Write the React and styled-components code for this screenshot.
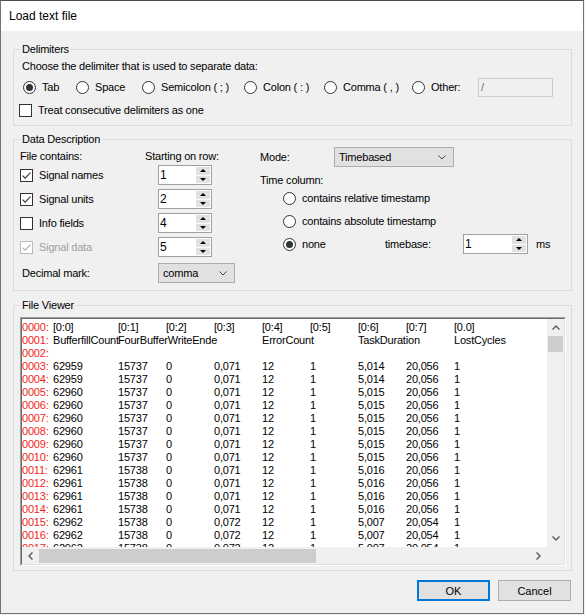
import React from 'react';
import styled, { createGlobalStyle } from 'styled-components';

const GlobalStyle = createGlobalStyle`
  * { box-sizing: border-box; }
  html, body { margin: 0; padding: 0; background: #f0f0f0; }
  body {
    font-family: "Liberation Sans", Arial, sans-serif;
    font-size: 11px;
    letter-spacing: -0.2px;
    color: #000;
  }
`;

const Window = styled.div`
  width: 584px;
  height: 614px;
  display: flex;
  flex-direction: column;
  background: #f0f0f0;
  border: 1px solid #737373;
  border-top-color: #4d4d4d;
`;

const TitleBar = styled.div`
  height: 30px;
  flex: none;
  background: #fff;
  padding-left: 8px;
  font-size: 12px;
  letter-spacing: 0;
  line-height: 30px;
`;

const Body = styled.div`
  flex: 1;
  display: flex;
  flex-direction: column;
  padding: 12px 11px 0 12px;
`;

const GroupBox = styled.fieldset`
  margin: ${p => p.$mt || 0}px 0 0;
  padding: ${p => p.$pt || 0}px 5px ${p => p.$pb || 0}px 6px;
  border: 1px solid #dcdcdc;
  min-width: 0;
`;

const Legend = styled.legend`
  padding: 0 2px;
  line-height: 13px;
`;

const Text = styled.div`
  line-height: 13px;
  padding-left: ${p => p.$indent || 0}px;
  margin-top: ${p => p.$mt || 0}px;
  color: ${p => (p.$disabled ? '#a0a0a0' : 'inherit')};
  white-space: nowrap;
`;

const Row = styled.div`
  display: flex;
  align-items: center;
  height: ${p => p.$h || 20}px;
  margin-top: ${p => p.$mt || 0}px;
  margin-left: ${p => p.$ml || 0}px;
  gap: ${p => p.$gap || 0}px;
`;

const Label = styled.div`
  flex: none;
  width: ${p => (p.$w ? `${p.$w}px` : 'auto')};
  padding-left: ${p => p.$indent || 0}px;
  line-height: 13px;
  white-space: nowrap;
`;

const Option = styled.div`
  display: flex;
  align-items: center;
  gap: 6px;
  flex: none;
  width: ${p => (p.$w ? `${p.$w}px` : 'auto')};
  line-height: 13px;
  white-space: nowrap;
  color: ${p => (p.$disabled ? '#a0a0a0' : 'inherit')};
`;

const RadioCircle = styled.span`
  width: 13px;
  height: 13px;
  flex: none;
  border-radius: 50%;
  border: 1px solid #333;
  background: #fff;
  display: inline-flex;
  align-items: center;
  justify-content: center;

  &::after {
    content: '';
    display: ${p => (p.$checked ? 'block' : 'none')};
    width: 7px;
    height: 7px;
    border-radius: 50%;
    background: #333;
  }
`;

const CheckBoxBox = styled.span`
  width: 13px;
  height: 13px;
  flex: none;
  border: 1px solid ${p => (p.$disabled ? '#bcbcbc' : '#333')};
  background: #fff;
  display: inline-flex;

  svg { display: block; }
`;

const TextBox = styled.div`
  width: ${p => p.$w}px;
  height: 19px;
  border: 1px solid #cccccc;
  background: #f0f0f0;
  color: #6d6d6d;
  padding-left: 2px;
  line-height: 17px;
`;

const SpinnerBox = styled.div`
  width: ${p => p.$w}px;
  height: 20px;
  margin-left: ${p => p.$ml || 0}px;
  display: flex;
  border: 1px solid #a0a0a0;
  background: #fff;
  flex: none;
`;

const SpinValue = styled.div`
  flex: 1;
  padding-left: 1px;
  font-size: 12px;
  line-height: 18px;
`;

const SpinButtons = styled.div`
  width: 16px;
  display: flex;
  flex-direction: column;
  gap: 1px;
  padding: 1px;
`;

const SpinButton = styled.div`
  flex: 1;
  background: #e1e1e1;
  display: flex;
  align-items: center;
  justify-content: center;

  &::after {
    content: '';
    border-left: 3px solid transparent;
    border-right: 3px solid transparent;
    ${p => (p.$down ? 'border-top: 3px solid #000;' : 'border-bottom: 3px solid #000;')}
  }
`;

const ComboBox = styled.div`
  width: ${p => p.$w}px;
  height: 20px;
  flex: none;
  background: #e1e1e1;
  border: 1px solid #adadad;
  display: flex;
  align-items: center;
  justify-content: space-between;
  padding: 0 7px 0 4px;
  line-height: 13px;

  svg { display: block; }
`;

const Columns = styled.div`
  display: flex;
`;

const LeftColumn = styled.div`
  width: 240px;
  flex: none;
  padding-top: 4px;
`;

const StartGrid = styled.div`
  display: grid;
  grid-template-columns: 125px 115px;
  grid-template-rows: 11px repeat(4, 20px);
  row-gap: 4px;
  align-items: center;
`;

const GridHead = styled.div`
  align-self: start;
  line-height: 13px;
  white-space: nowrap;
`;

const RightColumn = styled.div`
  flex: 1;
  padding-top: 1px;
`;

const Viewer = styled.div`
  height: 249px;
  border: 1px solid;
  border-color: #a0a0a0 #ffffff #ffffff #a0a0a0;
`;

const ViewerInner = styled.div`
  height: 100%;
  border: 1px solid;
  border-color: #696969 #e3e3e3 #e3e3e3 #696969;
  background: #fff;
  display: grid;
  grid-template-columns: 1fr 17px;
  grid-template-rows: 1fr 17px;
  overflow: hidden;
`;

const TextArea = styled.div`
  overflow: hidden;
  padding-top: 2px;
`;

const Line = styled.div`
  display: grid;
  grid-template-columns: 31px 65px repeat(7, 48px) auto;
  height: 13px;
  line-height: 13px;
  white-space: nowrap;
`;

const LineNo = styled.span`
  color: #f2261a;
`;

const Cell = styled.span`
  grid-column: ${p => p.$col};
  grid-row: 1;
`;

const VScroll = styled.div`
  background: #f0f0f0;
  display: flex;
  flex-direction: column;
`;

const HScroll = styled.div`
  background: #f0f0f0;
  display: flex;
`;

const ScrollButton = styled.div`
  width: 17px;
  height: 17px;
  flex: none;
  display: flex;
  align-items: center;
  justify-content: center;

  svg { display: block; }
`;

const VThumb = styled.div`
  height: 16px;
  margin: 0 1px;
  background: #cdcdcd;
`;

const HThumb = styled.div`
  width: 277px;
  margin: 2px 0 1px;
  background: #cdcdcd;
`;

const Track = styled.div`
  flex: 1;
`;

const Corner = styled.div`
  background: #f0f0f0;
`;

const Footer = styled.div`
  display: flex;
  justify-content: flex-end;
  gap: 8px;
  margin-top: 9px;
  padding-right: 1px;
`;

const Button = styled.div`
  width: 73px;
  height: 21px;
  display: flex;
  align-items: center;
  justify-content: center;
  background: #e1e1e1;
  border: ${p => (p.$default ? '2px solid #0078d7' : '1px solid #adadad')};
  letter-spacing: 0;
`;

const Radio = ({ checked, w, children }) => (
  <Option $w={w}>
    <RadioCircle $checked={checked} />
    {children}
  </Option>
);

const CheckBox = ({ checked, disabled, children }) => (
  <Option $disabled={disabled}>
    <CheckBoxBox $disabled={disabled}>
      {checked && (
        <svg width="11" height="11" viewBox="0 0 11 11">
          <path d="M1.6 5.6 L4.1 8.1 L9.4 2.6" fill="none" stroke={disabled ? '#b0b0b0' : '#333'} strokeWidth="1.1" />
        </svg>
      )}
    </CheckBoxBox>
    {children}
  </Option>
);

const Spinner = ({ value, w, ml }) => (
  <SpinnerBox $w={w} $ml={ml}>
    <SpinValue>{value}</SpinValue>
    <SpinButtons>
      <SpinButton />
      <SpinButton $down />
    </SpinButtons>
  </SpinnerBox>
);

const Chevron = ({ dir = 'down', color = '#444', width = 1 }) => {
  const paths = {
    down: 'M0.5 0.5 L4 4 L7.5 0.5',
    up: 'M0.5 4.5 L4 1 L7.5 4.5',
  };
  if (dir === 'left' || dir === 'right') {
    const d = dir === 'left' ? 'M4.5 0.5 L1 4 L4.5 7.5' : 'M0.5 0.5 L4 4 L0.5 7.5';
    return (
      <svg width="5" height="8" viewBox="0 0 5 8">
        <path d={d} fill="none" stroke={color} strokeWidth={width} />
      </svg>
    );
  }
  return (
    <svg width="8" height="5" viewBox="0 0 8 5">
      <path d={paths[dir]} fill="none" stroke={color} strokeWidth={width} />
    </svg>
  );
};

const Combo = ({ w, ml, children }) => (
  <ComboBox $w={w} style={ml ? { marginLeft: ml } : undefined}>
    <span>{children}</span>
    <Chevron />
  </ComboBox>
);

const samples = [
  ['62959', '15737', '0,071', '5,014', '20,056'],
  ['62959', '15737', '0,071', '5,014', '20,056'],
  ['62960', '15737', '0,071', '5,015', '20,056'],
  ['62960', '15737', '0,071', '5,015', '20,056'],
  ['62960', '15737', '0,071', '5,015', '20,056'],
  ['62960', '15737', '0,071', '5,015', '20,056'],
  ['62960', '15737', '0,071', '5,015', '20,056'],
  ['62960', '15737', '0,071', '5,015', '20,056'],
  ['62961', '15738', '0,071', '5,016', '20,056'],
  ['62961', '15738', '0,071', '5,016', '20,056'],
  ['62961', '15738', '0,071', '5,016', '20,056'],
  ['62961', '15738', '0,071', '5,016', '20,056'],
  ['62962', '15738', '0,072', '5,007', '20,054'],
  ['62962', '15738', '0,072', '5,007', '20,054'],
  ['62962', '15738', '0,072', '5,007', '20,054'],
];

const lines = [
  ['[0:0]', '[0:1]', '[0:2]', '[0:3]', '[0:4]', '[0:5]', '[0:6]', '[0:7]', '[0.0]'],
  ['BufferfillCount', 'FourBufferWriteEnde', '', '', 'ErrorCount', '', 'TaskDuration', '', 'LostCycles'],
  [],
  ...samples.map(([a, b, c, d, e]) => [a, b, '0', c, '12', '1', d, e, '1']),
];

const FileViewer = () => (
  <Viewer>
    <ViewerInner>
      <TextArea>
        {lines.map((cells, i) => (
          <Line key={i}>
            <LineNo>{String(i).padStart(4, '0')}:</LineNo>
            {cells.map((c, j) => (c ? <Cell key={j} $col={j + 2}>{c}</Cell> : null))}
          </Line>
        ))}
      </TextArea>
      <VScroll>
        <ScrollButton><Chevron dir="up" color="#606060" width={1.5} /></ScrollButton>
        <VThumb />
        <Track />
        <ScrollButton><Chevron dir="down" color="#606060" width={1.5} /></ScrollButton>
      </VScroll>
      <HScroll>
        <ScrollButton><Chevron dir="left" color="#606060" width={1.5} /></ScrollButton>
        <HThumb />
        <Track />
        <ScrollButton><Chevron dir="right" color="#606060" width={1.5} /></ScrollButton>
      </HScroll>
      <Corner />
    </ViewerInner>
  </Viewer>
);

const App = () => {
  return (
    <>
      <GlobalStyle />
      <Window>
        <TitleBar>Load text file</TitleBar>
        <Body>
          <GroupBox $pt={4} $pb={7}>
            <Legend>Delimiters</Legend>
            <Text $indent={2}>Choose the delimiter that is used to separate data:</Text>
            <Row $h={19} $mt={5} $ml={3}>
              <Radio checked w={53}>Tab</Radio>
              <Radio w={66}>Space</Radio>
              <Radio w={102}>Semicolon ( ; )</Radio>
              <Radio w={80}>Colon ( : )</Radio>
              <Radio w={88}>Comma ( , )</Radio>
              <Radio w={66}>Other:</Radio>
              <TextBox $w={75}>/</TextBox>
            </Row>
            <Row $h={15} $mt={6} $ml={-1}>
              <CheckBox>Treat consecutive delimiters as one</CheckBox>
            </Row>
          </GroupBox>

          <GroupBox $mt={7} $pb={7}>
            <Legend>Data Description</Legend>
            <Columns>
              <LeftColumn>
                <StartGrid>
                  <GridHead>File contains:</GridHead>
                  <GridHead>Starting on row:</GridHead>
                  <CheckBox checked>Signal names</CheckBox>
                  <Spinner value="1" w={54} ml={13} />
                  <CheckBox checked>Signal units</CheckBox>
                  <Spinner value="2" w={54} ml={13} />
                  <CheckBox>Info fields</CheckBox>
                  <Spinner value="4" w={54} ml={13} />
                  <CheckBox checked disabled>Signal data</CheckBox>
                  <Spinner value="5" w={54} ml={13} />
                </StartGrid>
                <Row $mt={6}>
                  <Label $w={138} $indent={2}>Decimal mark:</Label>
                  <Combo w={77}>comma</Combo>
                </Row>
              </LeftColumn>
              <RightColumn>
                <Row>
                  <Label $w={74}>Mode:</Label>
                  <Combo w={120}>Timebased</Combo>
                </Row>
                <Text $mt={7}>Time column:</Text>
                <Row $mt={1} $ml={23}>
                  <Radio>contains relative timestamp</Radio>
                </Row>
                <Row $mt={3} $ml={23}>
                  <Radio>contains absolute timestamp</Radio>
                </Row>
                <Row $mt={3} $ml={23}>
                  <Radio checked w={102}>none</Radio>
                  <Label $w={78}>timebase:</Label>
                  <Spinner value="1" w={65} />
                  <Label style={{ marginLeft: 8 }}>ms</Label>
                </Row>
              </RightColumn>
            </Columns>
          </GroupBox>

          <GroupBox $mt={8} $pt={5} $pb={4}>
            <Legend>File Viewer</Legend>
            <FileViewer />
          </GroupBox>

          <Footer>
            <Button $default>OK</Button>
            <Button>Cancel</Button>
          </Footer>
        </Body>
      </Window>
    </>
  );
};

export default App;
